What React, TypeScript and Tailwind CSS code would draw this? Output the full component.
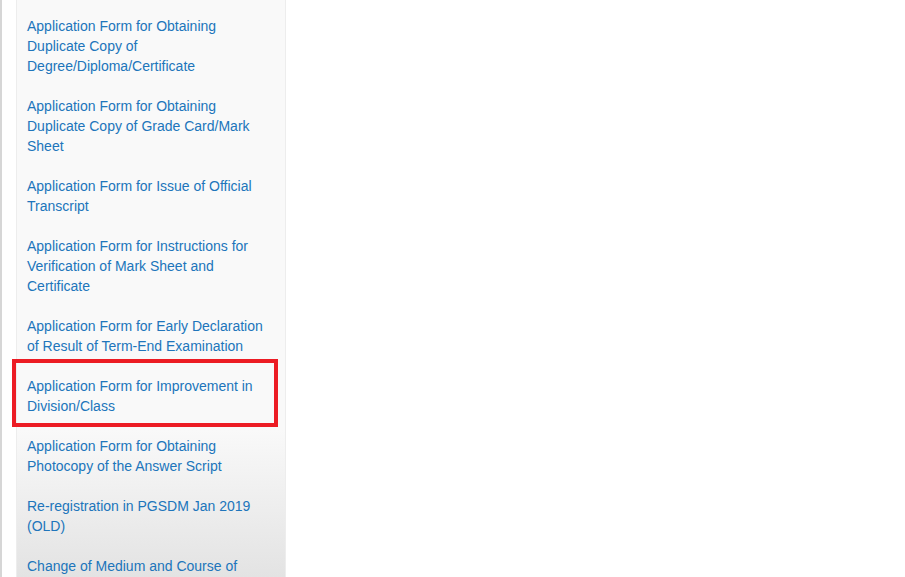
import React from "react";

const items: string[] = [
  "Application Form for Obtaining Duplicate Copy of Degree/Diploma/Certificate",
  "Application Form for Obtaining Duplicate Copy of Grade Card/Mark Sheet",
  "Application Form for Issue of Official Transcript",
  "Application Form for Instructions for Verification of Mark Sheet and Certificate",
  "Application Form for Early Declaration of Result of Term-End Examination",
  "Application Form for Improvement in Division/Class",
  "Application Form for Obtaining Photocopy of the Answer Script",
  "Re-registration in PGSDM Jan 2019 (OLD)",
  "Change of Medium and Course of Study",
];

export default function App() {
  return (
    <div
      className="relative flex h-[577px] w-[905px] overflow-hidden bg-white"
      style={{ fontFamily: '"Liberation Sans", Arial, sans-serif' }}
    >
      <div className="w-[2px] shrink-0 bg-[#d6d6d6]" />
      <div className="w-[14px] shrink-0" />
      <div className="flex h-full w-[270px] shrink-0 flex-col border-l border-r border-[#ededed] bg-[linear-gradient(to_bottom,#f9f9f9_0px,#f9f9f9_430px,#e3e3e3_577px)] pt-[6px] pl-[10px] pr-[16px]">
        {items.map((t) => (
          <div key={t} className="py-[10px]">
            <a className="block text-[14px] leading-[20px] text-[#2075bb]">{t}</a>
          </div>
        ))}
      </div>
      <div className="pointer-events-none absolute left-[12px] top-[359px] h-[68px] w-[266px] border-[4px] border-[#ec1c24]" />
    </div>
  );
}
